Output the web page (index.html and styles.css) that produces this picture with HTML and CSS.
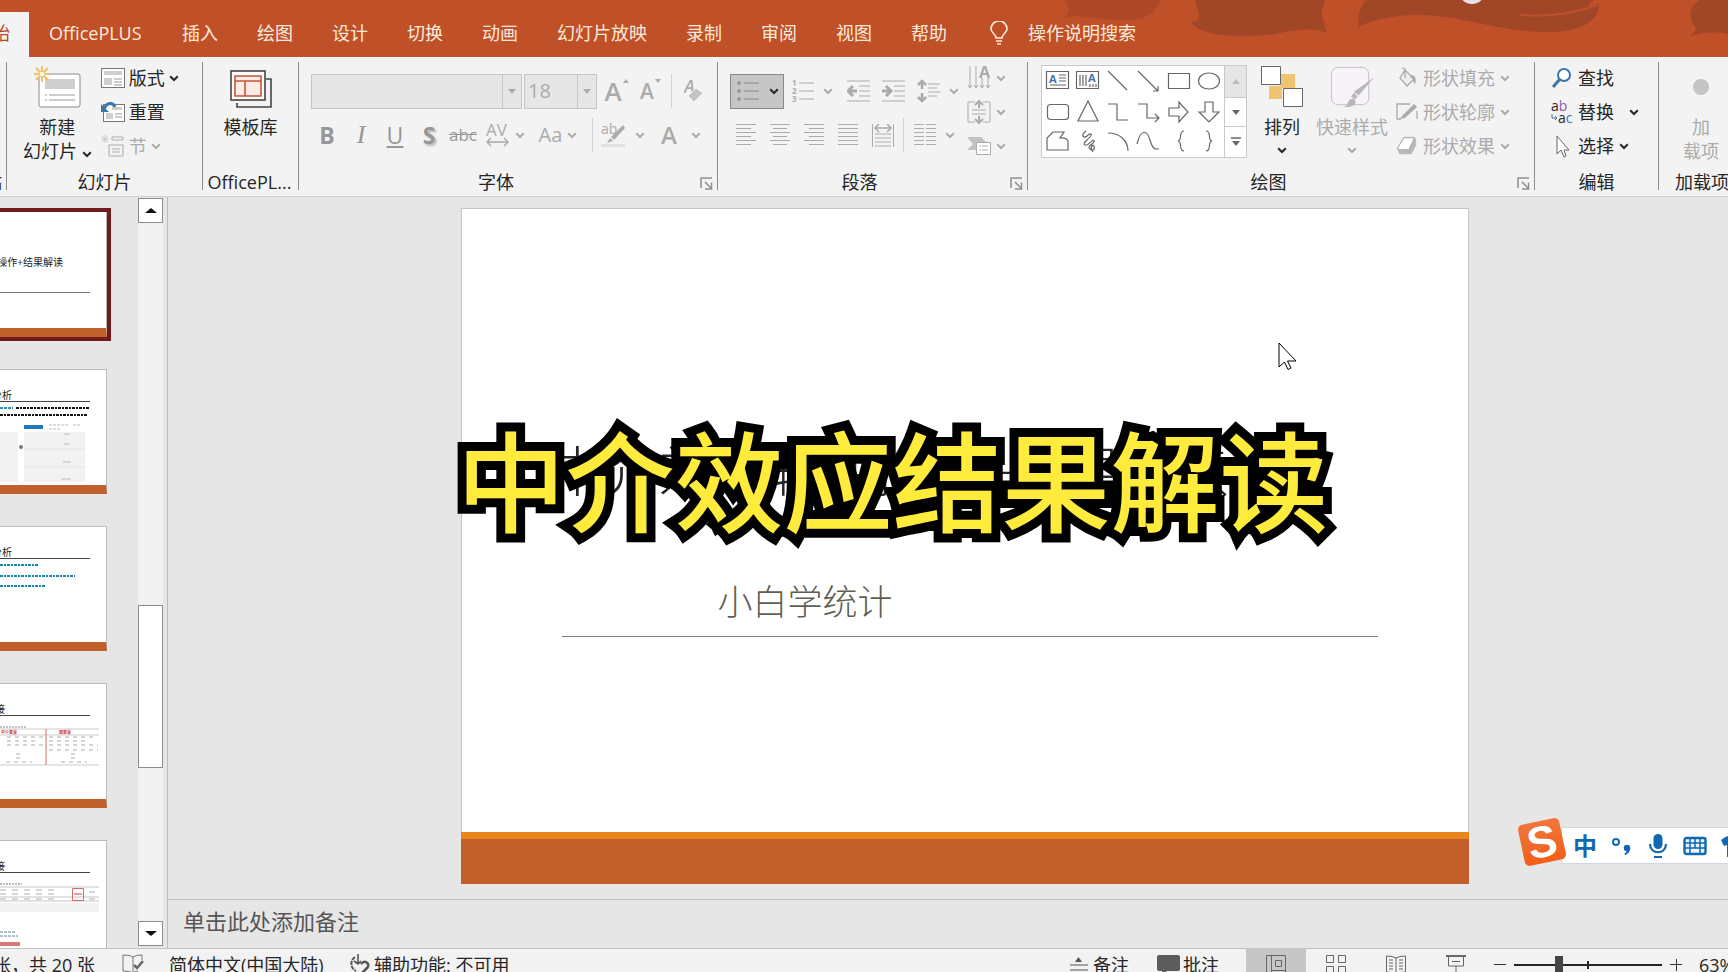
FILE: index.html
```html
<!DOCTYPE html>
<html lang="zh-CN">
<head>
<meta charset="utf-8">
<title>演示文稿</title>
<link rel="stylesheet" href="styles.css">
</head>
<body>
<svg class="defs" aria-hidden="true">
  <symbol id="chev" viewBox="0 0 10 7"><path d="M1.2 1.3 5 5l3.8-3.7" fill="none" stroke="currentColor" stroke-width="2"/></symbol>
  <symbol id="launch" viewBox="0 0 13 13"><path d="M1 11V1h11M5 5l6 6M11.500 5.500V12H5" fill="none" stroke="currentColor" stroke-width="1.500"/></symbol>
</svg>

<header class="titlebar">
  <svg class="art" viewBox="0 0 680 57" aria-hidden="true">
    <path d="M16 0H112C108 14 98 20 76 20 52 20 40 14 18 17 24 10 20 5 16 0Z" fill="#ac4827"/>
    <path d="M146 0H278C270 14 276 20 279 33 262 26 244 31 226 34 202 38 150 38 143 21 154 24 152 12 146 0Z" fill="#a24628"/>
    <path d="M319 0H546C536 6 540 9 551 3 552 18 538 32 500 32 440 32 400 8 344 17 330 19 320 22 311 27 309 14 313 5 319 0Z" fill="#a24628"/>
    <path d="M472 15C500 18 530 12 550 5" stroke="#bd5029" fill="none" stroke-width="2"/>
    <path d="M652 0H680V34C664 30 652 34 642 36 648 32 650 28 645 24 639 12 645 4 652 0Z" fill="#a24628"/>
    <circle cx="424" cy="-9" r="13" fill="#e6e1e6"/>
  </svg>
  <nav class="tabs">
    <button class="tab on">开始</button>
    <button class="tab plus">OfficePLUS</button>
    <button class="tab">插入</button>
    <button class="tab">绘图</button>
    <button class="tab">设计</button>
    <button class="tab">切换</button>
    <button class="tab">动画</button>
    <button class="tab">幻灯片放映</button>
    <button class="tab">录制</button>
    <button class="tab">审阅</button>
    <button class="tab">视图</button>
    <button class="tab">帮助</button>
    <button class="tab tell"><svg width="18" height="24" viewBox="0 0 18 24"><path d="M6 17C6 13 1 12 1 8a8 8 0 0 1 16 0c0 4-5 5-5 9ZM6 20h6M7 23h4" fill="none" stroke="currentColor" stroke-width="1.600"/></svg>操作说明搜索</button>
  </nav>
</header>

<section class="ribbon">
  <div class="group g0"><div></div><span class="glabel">剪贴</span></div>

  <div class="group g1">
    <div class="body">
      <button class="big">
        <svg width="48" height="44" viewBox="0 0 48 44"><rect x="6" y="9" width="41" height="33" rx="2" fill="#fff" stroke="#8a8a8a"/><path d="M12 14h30v10H12z" fill="#cfcfcf"/><path d="M12 30h2m2 0h26M12 35h2m2 0h26" stroke="#999"/><circle cx="9" cy="9" r="4" fill="#fff6df"/><path d="M9 1v16M1 9h16M3 3l12 12M15 3 3 15" stroke="#edc06a" stroke-width="2"/><circle cx="9" cy="9" r="3" fill="#fff6df" stroke="#edc06a"/></svg>
        <span>新建</span><span>幻灯片 <svg class="chev"><use href="#chev"/></svg></span>
      </button>
      <div class="rows">
        <button><svg width="24" height="20" viewBox="0 0 24 20"><rect x=".5" y=".5" width="23" height="19" fill="#fff" stroke="#777"/><path d="M3 3h18v4H3zM3 10h8v7H3z" fill="#cfcfcf"/><path d="M13 11h8M13 14h8M13 17h8" stroke="#999"/></svg>版式 <svg class="chev"><use href="#chev"/></svg></button>
        <button><svg width="24" height="20" viewBox="0 0 24 20"><rect x="2.500" y="2.500" width="21" height="17" fill="#fff" stroke="#777"/><path d="M11 5h10v3H11zM5 11h7v6H5z" fill="#cfcfcf"/><path d="M14 12h7M14 15h7" stroke="#999"/><path d="M14 5C12 0 6 0 3 7" fill="none" stroke="#3d76a8" stroke-width="3"/><path d="M0 2v8h8z" fill="#3d76a8"/></svg>重置</button>
        <button disabled><svg width="24" height="22" viewBox="0 0 24 22"><path d="M4 0v8M0 4h8M1 1l6 6M7 1 1 7" stroke="#c8c8c8"/><path d="M11 2h11M11 5h11M11 2v3M22 2v3M8 10v11h14V10ZM11 14h8M11 17h8" fill="none" stroke="currentColor"/></svg>节 <svg class="chev"><use href="#chev"/></svg></button>
      </div>
    </div>
    <span class="glabel">幻灯片</span>
  </div>

  <div class="group g2">
    <div class="body">
      <button class="big">
        <svg width="44" height="44" viewBox="0 0 44 44"><path d="M8 38v4h34V14h-5" fill="none" stroke="#444" stroke-width="1.600"/><rect x="2" y="6" width="34" height="29" fill="#fff" stroke="#444" stroke-width="1.600"/><path d="M6 11h26v20H6zM6 16h26M16 16v15" fill="#fdece6" stroke="#c4563a" stroke-width="1.600"/></svg>
        <span>模板库</span>
      </button>
    </div>
    <span class="glabel">OfficePL...</span>
  </div>

  <div class="group g3">
    <div class="stack">
      <div class="line">
        <label class="combo font"><input type="text" aria-label="字体" disabled><i class="down"></i></label>
        <label class="combo size"><input type="text" aria-label="字号" value="18" disabled><i class="down"></i></label>
        <button class="ic grow" disabled><b>A</b><svg width="8" height="6" viewBox="0 0 8 6"><path d="M1 5 4 1l3 4z" fill="currentColor"/></svg></button>
        <button class="ic shrink" disabled><b>A</b><svg width="8" height="6" viewBox="0 0 8 6"><path d="M1 1h6L4 5z" fill="currentColor"/></svg></button>
        <i class="vr"></i>
        <button class="ic" disabled aria-label="清除格式"><svg width="20" height="24" viewBox="0 0 20 24"><text x="0" y="14" class="ti">A</text><path d="m4 17 8-8 7 5-9 9z" fill="#c4c4c4" stroke="#f3f3f3"/></svg></button>
      </div>
      <div class="line two">
        <button class="ic l" disabled><b>B</b></button>
        <button class="ic l serif" disabled><i>I</i></button>
        <button class="ic l" disabled><u>U</u></button>
        <button class="ic l sh" disabled><b>S</b></button>
        <button class="ic st" disabled><s>abc</s></button>
        <button class="ic av" disabled><svg width="24" height="26" viewBox="0 0 24 26"><text x="0" y="14" class="tl">AV</text><path d="M2 20h19M5 16l-4 4 4 4M18 16l4 4-4 4" fill="none" stroke="currentColor" stroke-width="1.500"/></svg><svg class="chev"><use href="#chev"/></svg></button>
        <button class="ic aa" disabled>Aa<svg class="chev"><use href="#chev"/></svg></button>
        <i class="vr"></i>
        <button class="ic hl" disabled><svg width="26" height="26" viewBox="0 0 26 26"><text x="0" y="12" class="ts">ab</text><path d="M22 3 10 15l3 3L24 6z M9 16l-3 5 6-2z" fill="currentColor"/><path d="M0 22h24v3H0z" fill="#e3e0e5"/></svg><svg class="chev"><use href="#chev"/></svg></button>
        <button class="ic fc" disabled><b>A</b><svg class="chev"><use href="#chev"/></svg></button>
      </div>
    </div>
    <span class="glabel">字体</span>
    <button class="launch" aria-label="字体设置"><svg width="13" height="13"><use href="#launch"/></svg></button>
  </div>

  <div class="group g4">
    <div class="body">
      <div class="stack">
        <div class="line p1">
          <button class="ic bullets" aria-label="项目符号"><svg width="24" height="22" viewBox="0 0 24 22"><g fill="#999"><circle cx="3" cy="3" r="2"/><circle cx="3" cy="11" r="2"/><circle cx="3" cy="19" r="2"/></g><path d="M8 3h15M8 11h15M8 19h15" stroke="#8a8a8a"/></svg><svg class="chev"><use href="#chev"/></svg></button>
          <button class="ic w45" disabled aria-label="编号"><svg width="22" height="24" viewBox="0 0 22 24"><text x="0" y="7" class="tn">1</text><text x="0" y="15" class="tn">2</text><text x="0" y="23" class="tn">3</text><path d="M7 4h15M7 12h15M7 20h15" stroke="currentColor"/></svg><svg class="chev"><use href="#chev"/></svg></button>
          <button class="ic" disabled aria-label="减少缩进"><svg width="23" height="22" viewBox="0 0 23 22"><path d="M0 1h23M12 6h11M12 11h11M12 16h11M0 21h23" stroke="currentColor"/><path d="M10 11H2M6 6l-5 5 5 5" fill="none" stroke="currentColor" stroke-width="3"/></svg></button>
          <button class="ic" disabled aria-label="增加缩进"><svg width="23" height="22" viewBox="0 0 23 22"><path d="M0 1h23M12 6h11M12 11h11M12 16h11M0 21h23" stroke="currentColor"/><path d="M0 11h8M4 6l5 5-5 5" fill="none" stroke="currentColor" stroke-width="3"/></svg></button>
          <button class="ic w45" disabled aria-label="行距"><svg width="23" height="24" viewBox="0 0 23 24"><path d="M5 2v8M5 14v8M1 6l4-4 4 4M1 18l4 4 4-4" fill="none" stroke="currentColor" stroke-width="2.500"/><path d="M11 5h12M11 9h9M11 13h12M11 17h9" stroke="currentColor"/></svg><svg class="chev"><use href="#chev"/></svg></button>
        </div>
        <div class="line p2">
          <button class="ic" disabled aria-label="左对齐"><svg width="20" height="22" viewBox="0 0 20 22"><path d="M0 .5h20M0 4.500h15M0 8.500h20M0 12.500h15M0 16.500h20M0 20.500h15" stroke="currentColor"/></svg></button>
          <button class="ic" disabled aria-label="居中"><svg width="20" height="22" viewBox="0 0 20 22"><path d="M0 .5h20M3 4.500h14M0 8.500h20M3 12.500h14M0 16.500h20M3 20.500h14" stroke="currentColor"/></svg></button>
          <button class="ic" disabled aria-label="右对齐"><svg width="20" height="22" viewBox="0 0 20 22"><path d="M0 .5h20M5 4.500h15M0 8.500h20M5 12.500h15M0 16.500h20M5 20.500h15" stroke="currentColor"/></svg></button>
          <button class="ic" disabled aria-label="两端对齐"><svg width="20" height="22" viewBox="0 0 20 22"><path d="M0 .5h20M0 4.500h20M0 8.500h20M0 12.500h20M0 16.500h20M0 20.500h20" stroke="currentColor"/></svg></button>
          <button class="ic" disabled aria-label="分散对齐"><svg width="22" height="23" viewBox="0 0 22 23"><path d="M.5 0v23M21.500 0v23M3 10h16M3 14h16M3 18h16M3 22h16" stroke="currentColor"/><path d="M3 4h16M7 0 3 4l4 4M15 0l4 4-4 4" fill="none" stroke="currentColor" stroke-width="1.600"/></svg></button>
          <i class="vr"></i>
          <button class="ic w45" disabled aria-label="分栏"><svg width="22" height="22" viewBox="0 0 22 22"><path d="M0 .5h10M12 .5h10M0 4.500h10M12 4.500h10M0 8.500h10M12 8.500h10M0 12.500h10M12 12.500h10M0 16.500h10M12 16.500h10M0 20.500h10M12 20.500h10" stroke="currentColor"/></svg><svg class="chev"><use href="#chev"/></svg></button>
        </div>
      </div>
      <div class="rows mini">
        <button disabled aria-label="文字方向"><svg width="24" height="24" viewBox="0 0 24 24"><path d="M3 0v22M9 0v22M15 12v10M21 12v10M1 19l2 3 2-3M7 19l2 3 2-3M13 19l2 3 2-3M19 19l2 3 2-3" fill="none" stroke="currentColor"/><text x="12" y="12" class="ts b">A</text></svg><svg class="chev"><use href="#chev"/></svg></button>
        <button disabled aria-label="对齐文本"><svg width="24" height="24" viewBox="0 0 24 24"><path d="M8 2H1v20h7M16 2h7v20h-7M5 10h14M5 14h14" fill="none" stroke="currentColor"/><path d="M12 1v7M8 5l4-4 4 4M12 16v7M8 19l4 4 4-4" fill="none" stroke="currentColor" stroke-width="2"/></svg><svg class="chev"><use href="#chev"/></svg></button>
        <button disabled aria-label="SmartArt"><svg width="24" height="20" viewBox="0 0 24 20"><path d="M0 1h14l7 7-4 6H0l6-6z" fill="#c2c2c2"/><path d="M9.500 6.500h14v12h-14z" fill="#fff" stroke="currentColor"/><path d="M12 10h2m1 0h6M12 14h2m1 0h6" stroke="currentColor"/></svg><svg class="chev"><use href="#chev"/></svg></button>
      </div>
    </div>
    <span class="glabel">段落</span>
    <button class="launch" aria-label="段落设置"><svg width="13" height="13"><use href="#launch"/></svg></button>
  </div>

  <div class="group g5">
    <div class="body">
      <div class="gallery">
        <svg class="shapes" width="182" height="90" viewBox="0 0 182 90" fill="none" stroke="#666" stroke-width="1.200">
          <path d="M4.500 5.500h22v17h-22zM17 9h7M17 12h7M17 15h7M8 19h16"/><text x="7" y="17" class="tb">A</text>
          <path d="M34.500 5.500h22v17h-22zM38 9v11M41 9v11M44 9v11M48 18v3M51 18v3M54 18v3"/><text x="46" y="16" class="tb">A</text>
          <path d="m66 5 19 19M96 5l20 20M116 20v5h-5M126.500 7.500h21v15h-21z"/><ellipse cx="167" cy="15" rx="10.500" ry="8"/>
          <rect x="5.500" y="38.500" width="21" height="15" rx="3"/><path d="m46 35 10 20H36zM66 38h9v16h11M96 38h9v14h12M113 48l4 4-4 4M127 42h10v-6l9 10-9 10v-6h-10zM163 36h8v10h6l-10 10-10-10h6z"/>
          <path d="M5 84v-12l6-6h11l-4 6q6-1 8 3v9zM44 65c-6 4-2 8 1 5s6-3 3 1-8 6-5 8 8-7 9-4-8 5-4 8 5-1 4-3-5 1-1 6M66 67c12 0 20 8 20 18M95 78c4-16 10-14 13-4s5 9 9 9"/>
          <path d="M142 65c-6 0-1 9-6 10 5 1 0 10 6 10M164 65c6 0 1 9 6 10-5 1 0 10-6 10"/>
        </svg>
        <div class="scroller"><button disabled aria-label="上移"><i class="up"></i></button><button aria-label="下移"><i class="down"></i></button><button aria-label="更多"><svg width="10" height="10" viewBox="0 0 10 10"><path d="M0 1h10" stroke="currentColor" stroke-width="1.500"/><path d="M1 4h8L5 9z" fill="currentColor"/></svg></button></div>
      </div>
      <button class="big arr">
        <svg width="42" height="44" viewBox="0 0 42 44"><path d="M20 9h14v14H20zM8 21h13v13H8z" fill="#efc573"/><path d="M.5 1.500h19v18H.5zM22.500 23.500h19v18h-19z" fill="#fff" stroke="#666"/></svg>
        <span>排列</span><svg class="chev"><use href="#chev"/></svg>
      </button>
      <button class="big quick" disabled>
        <svg width="46" height="46" viewBox="0 0 46 46"><rect x="1.500" y="2.500" width="39" height="39" rx="7" fill="#f8f3f8" stroke="#c2bfc4"/><path d="M46 13 30 32l-5-4ZM25 29l4 4-3 3-4-3z" fill="#b9b6ba"/><path d="M14 44c6-1 3-8 10-9 5 2 4 10-10 9z" fill="#b9b6ba"/></svg>
        <span>快速样式</span><svg class="chev"><use href="#chev"/></svg>
      </button>
      <div class="rows fmt">
        <button disabled><svg width="22" height="22" viewBox="0 0 22 22"><path d="m9 3 9 9-7 7-7-8zM9 11V2l-3-1" fill="#eee" stroke="currentColor" stroke-width="1.300"/><path d="M16 8c5 2 4 6 3 9-2-1-1-5-5-7z" fill="currentColor"/></svg>形状填充<svg class="chev"><use href="#chev"/></svg></button>
        <button disabled><svg width="22" height="22" viewBox="0 0 22 22"><path d="M14 3H1v15h4M21 10v8" fill="none" stroke="currentColor" stroke-width="1.300"/><path d="m6 15 12-12 3 3L9 17l-5 1z" fill="currentColor"/></svg>形状轮廓<svg class="chev"><use href="#chev"/></svg></button>
        <button disabled><svg width="22" height="22" viewBox="0 0 24 22"><path d="M1 14 7 3q1-2 3-2h10l2 3v6l-5 10H4z" fill="#b9b9b9"/><path d="M2 13 8 3q1-1 3-1h9l-6 13H3z" fill="#fff" stroke="#aaa"/></svg>形状效果<svg class="chev"><use href="#chev"/></svg></button>
      </div>
    </div>
    <span class="glabel">绘图</span>
    <button class="launch" aria-label="绘图设置"><svg width="13" height="13"><use href="#launch"/></svg></button>
  </div>

  <div class="group g6">
    <div class="rows">
      <button><svg width="22" height="22" viewBox="0 0 22 22"><circle cx="13" cy="8" r="6" fill="#fff" stroke="#3d76a8" stroke-width="2"/><path d="m9 12-7 8" stroke="#3d76a8" stroke-width="3"/></svg>查找</button>
      <button><svg width="22" height="24" viewBox="0 0 22 24"><text x="0" y="11" class="ta">a<tspan fill="#8d5ba8">b</tspan></text><text x="7" y="23" class="ta">a<tspan fill="#3d76a8">c</tspan></text><path d="M1 14v4h5M4 16l2 2-2 2" stroke="#3d76a8" fill="none"/></svg>替换 <svg class="chev far"><use href="#chev"/></svg></button>
      <button><svg width="22" height="24" viewBox="0 0 22 24"><path d="M6 2v18l4-4 3 7 2-1-2-6h5z" fill="#fff" stroke="#666"/></svg>选择<svg class="chev"><use href="#chev"/></svg></button>
    </div>
    <span class="glabel">编辑</span>
  </div>

  <div class="group g7">
    <div class="body">
      <button class="big" disabled><svg width="44" height="44" viewBox="0 0 44 44"><circle cx="22" cy="22" r="8" fill="#c4c4c4"/></svg><span>加</span><span>载项</span></button>
    </div>
    <span class="glabel">加载项</span>
  </div>
</section>

<main class="work">
  <aside class="thumbs">
    <div class="thumb sel"><svg viewBox="0 0 186 125"><text x="142" y="53" class="th big-th">操作+结果解读</text><path d="M19 79.500h150" stroke="#777"/></svg></div>
    <div class="thumb"><svg viewBox="0 0 186 125"><text x="91" y="29" class="th big-th">分析</text><path d="M19 31.500h150" stroke="#444"/><path d="M79 38h13" stroke="#2d93c4" stroke-width="2" stroke-dasharray="3 1"/><path d="M95 38h74M79 45h87" stroke="#111" stroke-width="2" stroke-dasharray="3 1 2 1"/><path d="M103 55h19v4h-19z" fill="#1f78b8"/><path d="M128 55h20m4 0h8M128 59h12" stroke="#bbb" stroke-dasharray="3 1"/><path d="M79 62h18v50H79zM103 62h61v50h-61z" fill="#f2f2f2"/><path d="M103 79h61M103 97h61" stroke="#e4e4e4"/><path d="M143 64h6M143 74h6M142 92h8M140 109h10" stroke="#bbb"/><circle cx="100" cy="77" r="2" fill="#777"/></svg></div>
    <div class="thumb"><svg viewBox="0 0 186 125"><text x="91" y="29" class="th big-th">分析</text><path d="M19 31.500h150" stroke="#444"/><path d="M79 38h39M79 49h75M79 59h46" stroke="#1786b0" stroke-width="2" stroke-dasharray="3 1 2 1"/></svg></div>
    <div class="thumb"><svg viewBox="0 0 186 125"><text x="84" y="29" class="th big-th">接</text><path d="M19 31.500h150" stroke="#444"/><path d="M79 43h26" stroke="#888" stroke-dasharray="2 1"/><path d="M79 45h99M79 51h99M79 81h99" stroke="#999" stroke-width=".5"/><text x="80" y="50" class="tr">中介变量</text><text x="138" y="50" class="tr">因变量</text><path d="M125 45v36" stroke="#d66"/><path d="M86 53h36M128 53h48M86 57h30M128 57h40M86 61h36M128 61h49M128 66h49M95 70h6M150 70h6M95 74h6M150 74h6M85 78h26M140 78h26" stroke="#999" stroke-width=".8" stroke-dasharray="4 4"/></svg></div>
    <div class="thumb"><svg viewBox="0 0 186 125"><text x="84" y="29" class="th big-th">接</text><path d="M19 31.500h150" stroke="#444"/><path d="M79 43h22" stroke="#777" stroke-dasharray="2 1"/><path d="M79 46h99M79 56h99M79 60h99" stroke="#888" stroke-width=".5"/><path d="M79 49h60M79 53h60M79 58h60M168 51h8M168 58h8" stroke="#999" stroke-width=".8" stroke-dasharray="6 6"/><path d="M151.500 47.500h11v12h-11z" fill="none" stroke="#d66"/><path d="M153 53h8" stroke="#b44"/><path d="M79 62h99v9H79z" fill="#f3f3f3"/><path d="M79 91h15M79 95h18" stroke="#688" stroke-dasharray="3 1"/><path d="M79 101h20v4H79z" fill="#dc7777"/></svg></div>
  </aside>
  <div class="vbar">
    <button aria-label="向上滚动"><i class="up"></i></button>
    <div class="track"><div class="knob"></div></div>
    <button aria-label="向下滚动"><i class="down"></i></button>
  </div>
  <section class="editor">
    <div class="stage">
      <article class="slide">
        <h1 class="title">中介效应软件操作+结果解读</h1>
        <p class="sub">小白学统计</p>
        <hr class="rule">
        <div class="foot"></div>
        <div class="caption">中介效应结果解读</div>
        <svg class="mouse" width="20" height="29" viewBox="0 0 20 29"><path d="M1 1v24l5.500-5L10 27.500l3-1.500-3.500-7H18Z" fill="#fff" stroke="#000"/></svg>
      </article>
    </div>
    <div class="notes">单击此处添加备注</div>
  </section>
  <div class="ime">
    <div class="logo">S</div>
    <button class="zh">中</button>
    <button aria-label="标点"><svg width="22" height="24" viewBox="0 0 22 24"><circle cx="5" cy="8" r="3" fill="none" stroke="currentColor" stroke-width="2"/><circle cx="16" cy="14" r="3.200" fill="currentColor"/><path d="M19.200 14q0 5-5 7l-1-1q3-2 3-5z" fill="currentColor"/></svg></button>
    <button aria-label="语音"><svg width="22" height="26" viewBox="0 0 22 26"><rect x="6.500" y="1" width="9" height="15" rx="4.500" fill="currentColor"/><path d="M3 11c0 11 16 11 16 0M7 24h8" fill="none" stroke="currentColor" stroke-width="2.200"/></svg></button>
    <button aria-label="键盘"><svg width="24" height="20" viewBox="0 0 24 20"><rect x="1.500" y="2" width="21" height="16" rx="2" fill="#eaf4ff" stroke="currentColor" stroke-width="2.400"/><path d="M2 7h20M2 12h20M7 2v10M12 2v10M17 2v10M7 12v6M17 12v6" stroke="currentColor" stroke-width="1.500"/></svg></button>
    <button aria-label="皮肤"><svg width="24" height="22" viewBox="0 0 24 22"><path d="m0 5 6-4q6 5 12 0l6 4-3 6-3-1v12H6V10l-3 1z" fill="currentColor"/></svg></button>
  </div>
</main>

<footer class="status">
  <span class="page">张，共 20 张</span>
  <svg class="spell" width="22" height="22" viewBox="0 0 22 22"><path d="M11 4v15M11 4Q9 2 1 2v16q8 0 10 2 2-2 5-2M11 4q2-2 9-2v5" fill="none" stroke="#777"/><path d="m12 12 3 3 6-7" fill="none" stroke="#666" stroke-width="2.500"/></svg>
  <span class="lang">简体中文(中国大陆)</span>
  <span class="acc"><svg width="24" height="24" viewBox="0 0 24 24"><path d="M7 4a8 8 0 0 0 1 14" fill="none" stroke="#555" stroke-width="2" stroke-dasharray="4 1"/><path d="M10 1v10M6 8l4 3 3-3" fill="none" stroke="#555" stroke-width="1.600"/><path d="M13 11c4-5 10 0 6 4l-6 6" fill="none" stroke="#555" stroke-width="2.500"/></svg>辅助功能: 不可用</span>
  <button class="nt"><svg width="18" height="18" viewBox="0 0 18 18"><path d="M5 6h7L8.500 1z" fill="#555"/><path d="M0 9h18M0 14h18" stroke="#555"/></svg>备注</button>
  <button class="cm"><svg width="23" height="22" viewBox="0 0 23 22"><path d="M2 1h19q2 0 2 2v12q0 2-2 2H10l-5 5v-5H2q-2 0-2-2V3q0-2 2-2z" fill="#5c5c5c"/></svg>批注</button>
  <button class="vw on" aria-label="普通视图"><svg width="20" height="20" viewBox="0 0 20 20"><path d="M.5.5h19v19H.5zM5.500.5v19M9.500 5.500h6v6h-6zM5 15.500h14" fill="none" stroke="#666"/></svg></button>
  <button class="vw" aria-label="幻灯片浏览"><svg width="20" height="20" viewBox="0 0 20 20"><path d="M.5.500h7v7h-7zM12.500.500h7v7h-7zM.5 11.500h7v7h-7zM12.500 11.500h7v7h-7z" fill="none" stroke="#666"/></svg></button>
  <button class="vw" aria-label="阅读视图"><svg width="20" height="20" viewBox="0 0 20 20"><path d="M10 3v16M10 3Q7 1 .5 1v16q6 0 9.500 2 3-2 9.500-2V1q-6 0-9.500 2M3 5h4M3 8h4M3 11h4M3 14h4M13 5h4M13 8h4M13 11h4M13 14h4" fill="none" stroke="#666"/></svg></button>
  <button class="vw" aria-label="幻灯片放映"><svg width="20" height="20" viewBox="0 0 20 20"><path d="M0 1h20" stroke="#666" stroke-width="2"/><path d="M2.500 2v9h15V2M6 6.500h8M10 11v6M5 18.500h10" fill="none" stroke="#666"/></svg></button>
  <div class="zoom"><button aria-label="缩小"><svg width="12" height="12"><path d="M0 5.500h12" stroke="#333"/></svg></button><div class="slider"><i class="tick"></i><i class="grip"></i></div><button aria-label="放大"><svg width="12" height="12"><path d="M0 5.500h12M6.500 0v12" stroke="#333"/></svg></button></div>
  <span class="pct">63%</span>
</footer>
</body>
</html>
```
FILE: styles.css
```css
* { box-sizing: border-box; }
body {
  margin: 0;
  height: 100vh;
  overflow: hidden;
  display: flex;
  flex-direction: column;
  background: #e6e6e6;
  color: #262626;
  font: 18px/24px "Open Sans", "Noto Sans CJK SC", sans-serif;
}
button {
  border: 0;
  margin: 0;
  padding: 0;
  background: none;
  color: inherit;
  font: inherit;
  white-space: nowrap;
}
button:disabled { color: #ababab; }
svg { flex: none; display: block; }
.defs { display: none; }
.chev { display: inline-block; width: 10px; height: 7px; }

/* title bar */
.titlebar { position: relative; height: 57px; flex: none; background: #c05027; overflow: hidden; }
.art { position: absolute; right: 0; top: 0; width: 680px; height: 57px; }
.tabs { position: relative; display: flex; height: 57px; padding-top: 12px; }
.tab { height: 45px; padding-bottom: 3px; margin-right: 39px; color: #fdeadd; display: flex; align-items: center; }
.tab.on { background: #f3f3f3; color: #b7472a; width: 29px; justify-content: flex-end; padding-right: 19px; margin-right: 20px; }
.tab.plus { width: 94px; }
.tell { gap: 20px; margin-left: 4px; }

/* ribbon */
.ribbon { flex: none; display: flex; height: 140px; padding-top: 5px; background: #f3f3f3; border-bottom: 1px solid #cfcfcf; }
.group { position: relative; flex: none; height: 128px; display: flex; flex-direction: column; justify-content: space-between; border-right: 1px solid #8c8c8c; }
.body { display: flex; }
.glabel { line-height: 16px; text-align: center; white-space: nowrap; }
.g0 { width: 7px; padding-right: 4px; overflow: hidden; }
.g0 .glabel { align-self: flex-end; }
.g1 { width: 196px; padding-left: 16px; }
.g1 .glabel { margin-left: -16px; }
.g2 { width: 96px; }
.g2 .glabel { margin-right: 2px; }
.g2 .body { justify-content: center; }
.g3 { width: 419px; padding-left: 12px; }
.g3 .glabel { margin-left: -36px; }
.g4 { width: 310px; padding-left: 12px; }
.g4 .glabel { margin-left: -38px; }
.g5 { width: 507px; padding-left: 13px; }
.g5 .glabel { margin-left: -38px; }
.g6 { width: 124px; padding-left: 16px; }
.g6 .glabel { margin-left: -16px; }
.g7 { flex: 1 0 69px; border-right: 0; padding-left: 12px; }
.g7 .glabel { text-align: left; margin-left: 4px; }
.launch { position: absolute; right: 4px; bottom: 0; color: #8f8f8f; height: 13px; }

.big { display: flex; flex-direction: column; align-items: center; padding-top: 3px; }
.big > svg:first-child { margin-bottom: 6px; height: 44px; }
.big > .chev { margin-top: 8px; }
.g7 .big { width: 60px; }
.rows { display: grid; grid-template-rows: repeat(3, 34px); margin-top: -1px; }
.rows button { display: flex; align-items: center; justify-content: flex-start; gap: 5px; }
.g1 .rows { margin-left: 9px; }
.g1 .rows button { gap: 4px; }

.stack { display: flex; flex-direction: column; }
.line { display: flex; align-items: center; height: 36px; margin-top: 11px; }
.line.two, .line.p2 { height: 38px; margin-top: 7px; }
.vr { width: 1px; height: 34px; background: #d2d2d2; }
.ic { height: 36px; display: flex; align-items: center; justify-content: center; line-height: 30px; }
.combo { display: flex; align-items: center; height: 35px; background: #e6e6e6; border: 1px solid #c6c6c6; }
.combo input { width: 100%; min-width: 0; height: 33px; padding: 0 3px 2px; border: 0; border-right: 1px solid #c6c6c6; background: none; color: #ababab; font: inherit; font-size: 20px; }
.combo .down { margin: 0 5px; color: #ababab; }
.font { width: 211px; }
.size { width: 73px; margin-left: 2px; }
.down, .up { flex: none; width: 0; height: 0; border: 4px solid transparent; }
.down { border-top: 5px solid currentColor; border-bottom: 0; }
.up { border-bottom: 5px solid currentColor; border-top: 0; }
.grow { margin-left: 10px; width: 20px; font-size: 26px; }
.shrink { margin: 0 10px 0 14px; width: 20px; font-size: 21px; }
.grow b, .shrink b { font-weight: 600; }
.grow svg, .shrink svg { align-self: flex-start; margin-top: 5px; }
.line .vr + .ic { margin-left: 12px; }
text { fill: currentColor; stroke: none; font-family: "Open Sans", "Noto Sans CJK SC", sans-serif; }
.ti { font-size: 18px; font-style: italic; font-weight: 600; }
.tl { font-size: 17px; }
.ts { font-size: 14px; }
.ts.b { font-weight: 700; font-size: 16px; }
.tn { font-size: 8px; font-weight: 700; }
.tb { font-size: 11px; font-weight: 700; fill: #3d76a8; }
.ta { font-size: 14px; }
.th { font-size: 10px; fill: #222; }
.big-th { text-anchor: end; }
.tr { font-size: 4px; fill: #c33; font-weight: 700; }
.l { width: 34px; font-size: 23px; }
.serif { font-family: "Liberation Serif", serif; font-size: 26px; }
.sh { text-shadow: 2px 2px 2px #bbb; }
.st { width: 34px; font-size: 17px; }
.line button.l, .line button.st { color: #979797; }
.av { width: 50px; gap: 5px; }
.aa { width: 56px; gap: 5px; font-size: 20px; }
.hl { gap: 8px; }
.line.two .vr { margin-left: 6px; }
.line.two .vr + .ic { margin-left: 8px; }
.fc { margin-left: 16px; font-size: 24px; gap: 14px; }
.fc b { font-weight: 600; }
.two { margin-left: -1px; }
.p1 { gap: 12px; }
.bullets { width: 54px; height: 35px; margin-right: -4px; gap: 9px; background: #c6c6c6; border: 1px solid #8a8a8a; }
.w45 { gap: 9px; }
.p1 .w45 { margin-right: 2px; }
.p2 { gap: 14px; padding-left: 6px; }
.p2 .vr { margin: 0 -4px 0 -5px; }
.line.p2 .vr + .ic { margin-left: 0; }
.mini { margin-left: 6px; }

.gallery { display: flex; width: 206px; height: 93px; margin-top: 3px; background: #fff; border: 1px solid #c9c9c9; }
.scroller { width: 22px; display: grid; grid-template-rows: 32px 29px 1fr; border-left: 1px solid #c9c9c9; color: #666; }
.scroller button { display: flex; align-items: center; justify-content: center; border-bottom: 1px solid #c9c9c9; }
.scroller button:last-child { border-bottom: 0; }
.scroller button:disabled { background: #e6e6e6; color: #bbb; }
.arr { margin-left: 14px; width: 42px; }
.quick { margin-left: 12px; width: 74px; }
.fmt { margin-left: 7px; }
.g6 .rows svg.far { margin-left: 10px; }

/* workspace */
.work { position: relative; flex: 1; min-height: 0; display: flex; }
.thumbs { width: 138px; padding-top: 15px; overflow: hidden; display: flex; flex-direction: column; gap: 32px; }
.thumb { flex: none; width: 187px; height: 125px; margin-left: -80px; background: #fff; border: 1px solid #bbb; border-bottom: 9px solid #c0602a; }
.thumb svg { width: 186px; height: 125px; margin-bottom: -9px; overflow: hidden; clip-path: inset(0 0 9px 0); }
.thumb.sel { outline: 4px solid #701b1b; border-top-color: #fff; }
.vbar { width: 30px; padding-right: 4px; display: flex; flex-direction: column; padding-top: 1px; padding-bottom: 2px; border-right: 1px solid #bdbdbd; }
.vbar button { height: 25px; display: flex; align-items: center; justify-content: center; background: #fff; border: 1px solid #8c8c8c; color: #111; }
.vbar .up, .vbar .down { border-left-width: 6px; border-right-width: 6px; }
.track { flex: 1; background: #f1f1f1; display: grid; grid-template-rows: 383fr 164fr 153fr; }
.knob { grid-row: 2; background: #fff; border: 1px solid #8c8c8c; }
.editor { flex: 1; min-width: 0; display: flex; flex-direction: column; }
.stage { flex: 1; min-height: 0; padding: 11px 0 0 34px; }
.slide { position: relative; width: 66%; aspect-ratio: 149 / 100; margin: 0 auto; display: flex; flex-direction: column; background: #fff; border: 1px solid #c4c4c4; border-bottom: 0; }
.title { margin: 230px 0 0 88px; font-size: 54px; line-height: 64px; font-weight: 300; white-space: nowrap; color: #262626; }
.sub { margin: 79px 0 0 255px; font-size: 35px; line-height: 40px; font-weight: 300; color: #5f5f52; }
.rule { width: auto; margin: 14px 90px 0 100px; border: 0; border-top: 1px solid #808080; }
.foot { height: 52px; margin: auto -1px 0; background: #c15e29; border-top: 7px solid #e8861c; }
.caption { position: absolute; left: -6px; top: 208px; font-size: 109px; line-height: 130px; font-weight: 500; white-space: nowrap; color: #ffeb3b; -webkit-text-stroke: 18px #000; paint-order: stroke fill; stroke-linejoin: miter; }
.mouse { position: absolute; right: 170px; top: 133px; }
.notes { height: 49px; padding: 8px 15px; border-top: 1px solid #bdbdbd; font-size: 22px; line-height: 26px; color: #555; }

.ime { position: absolute; right: 0; bottom: 84px; width: 167px; height: 37px; padding-left: 11px; display: flex; align-items: center; gap: 14px; background: #fff; border: 1px solid #cfd6e2; border-right: 0; color: #1267b3; }
.ime button { flex: none; }
.logo { position: absolute; left: -41px; top: -7px; width: 42px; height: 42px; border-radius: 5px; background: linear-gradient(#f0763c, #f25f17); color: #fff; transform: rotate(-12deg); font: 700 44px/42px "Liberation Sans", sans-serif; text-align: center; }
.zh { font-size: 24px; font-weight: 700; }

/* status bar */
.status { flex: none; display: flex; align-items: flex-start; height: 24px; overflow: hidden; background: #f2f2f2; border-top: 1px solid #c4c4c4; line-height: 32px; }
.status > svg, .status > span { flex: none; }
.status button { height: 32px; display: flex; align-items: center; }
.page { width: 95px; display: flex; justify-content: flex-end; white-space: nowrap; }
.spell { margin: 4px 25px 0 27px; }
.lang { width: 179px; white-space: nowrap; }
.acc { display: flex; align-items: center; gap: 2px; white-space: nowrap; }
.nt { margin-left: auto; gap: 5px; }
.cm { margin: 0 27px 0 28px; gap: 3px; }
.vw { width: 60px; justify-content: center; }
.vw.on { background: #c6c6c6; }
.zoom { display: flex; align-items: center; height: 32px; gap: 8px; margin: 0 17px 0 8px; }
.slider { position: relative; width: 148px; height: 2px; background: #262626; }
.grip { position: absolute; left: 41px; top: -8px; width: 8px; height: 18px; background: #444; }
.tick { position: absolute; left: 73px; top: -3px; width: 2px; height: 8px; background: #262626; }
.pct { width: 29px; overflow: hidden; }
```
